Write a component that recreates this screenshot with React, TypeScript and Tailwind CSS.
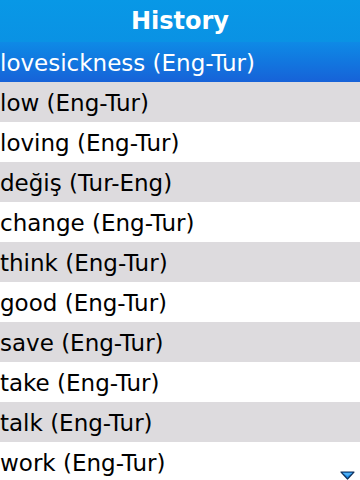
import React from "react";

const items = [
  "lovesickness (Eng-Tur)",
  "low (Eng-Tur)",
  "loving (Eng-Tur)",
  "değiş (Tur-Eng)",
  "change (Eng-Tur)",
  "think (Eng-Tur)",
  "good (Eng-Tur)",
  "save (Eng-Tur)",
  "take (Eng-Tur)",
  "talk (Eng-Tur)",
  "work (Eng-Tur)",
];

export default function App() {
  return (
    <div
      className="relative w-[360px] h-[480px] overflow-hidden bg-white"
      style={{ fontFamily: '"DejaVu Sans", sans-serif' }}
    >
      <div className="h-[42px] flex items-center justify-center bg-gradient-to-b from-[#0898e6] to-[#0a92e4] text-white font-bold text-[24px] leading-none">
        History
      </div>
      <div className="flex flex-col">
        {items.map((t, i) => {
          const selected = i === 0;
          const bg = selected
            ? "bg-gradient-to-b from-[#0e8ae6] to-[#1762d8] text-white"
            : i % 2 === 1
            ? "bg-[#dddbde] text-black"
            : "bg-white text-black";
          return (
            <div
              key={i}
              className={`h-[40px] shrink-0 flex items-center pl-0 pt-[2px] text-[23px] leading-none whitespace-nowrap ${bg}`}
            >
              {t}
            </div>
          );
        })}
      </div>
      <svg
        className="absolute left-[340px] top-[471px]"
        width="15"
        height="9"
        viewBox="0 0 15 9"
      >
        <path d="M1 1 L14 1 L7.5 8 Z" fill="#1c8ce8" stroke="#10305a" strokeWidth="1.2" strokeLinejoin="round" />
        <path d="M2.5 2 L12.5 2 L7.5 5 Z" fill="#4fb0f5" />
      </svg>
    </div>
  );
}
